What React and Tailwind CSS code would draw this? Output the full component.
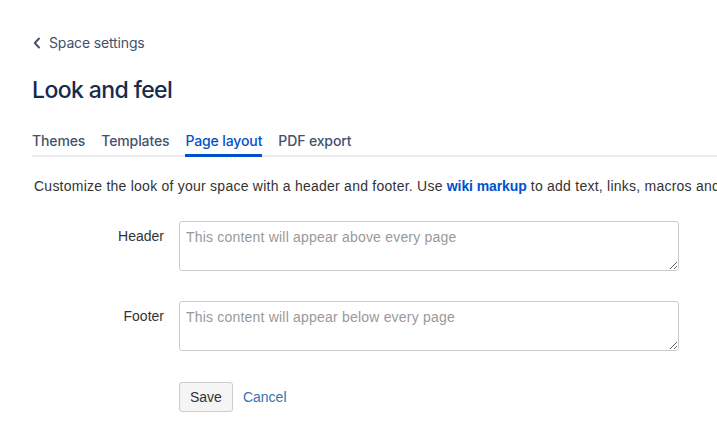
import React from "react";

export default function App() {
  return (
    <div className="w-[717px] h-[438px] overflow-hidden bg-white relative">
      <div className="pl-[32px] pt-[33px]">
        <a className="flex items-center gap-[8px] text-[14px] text-[#42526E] font-['Inter',sans-serif] leading-[20px] h-[20px] tracking-[-0.15px]">
          <svg width="8" height="12" viewBox="0 0 8 12" className="ml-[1px]">
            <path d="M6 1.5 L1.8 6 L6 10.5" fill="none" stroke="#42526E" strokeWidth="1.9" strokeLinecap="round" strokeLinejoin="round" />
          </svg>
          <span>Space settings</span>
        </a>
        <h1 className="mt-[23px] text-[23px] leading-[28px] font-medium text-[#172B4D] font-['Inter',sans-serif] tracking-[-0.6px]">
          Look and feel
        </h1>
        <div className="mt-[27px] flex border-b-2 border-[#EBECF0] font-['Inter',sans-serif] text-[14px] font-medium leading-[20px] tracking-[-0.12px]">
          <div className="mr-[16px] pb-[4px] text-[#42526E]">Themes</div>
          <div className="mr-[16px] pb-[4px] text-[#42526E]">Templates</div>
          <div className="mr-[16px] pb-[4px] text-[#0052CC] relative">
            Page layout
            <div className="absolute left-0 right-0 bottom-[-2px] h-[3px] bg-[#0052CC]"></div>
          </div>
          <div className="pb-[4px] text-[#42526E]">PDF export</div>
        </div>
        <p className="mt-[19px] ml-[2px] whitespace-nowrap text-[14px] leading-[20px] text-[#333333] font-['Liberation_Sans',Arial,sans-serif] tracking-[0.24px]">
          Customize the look of your space with a header and footer. Use{" "}
          <a className="text-[#0052CC] font-bold tracking-[-0.1px]">wiki markup</a> to add text, links, macros and other content.
        </p>
        <div className="mt-[25px] font-['Liberation_Sans',Arial,sans-serif] text-[14px]">
          <div className="flex">
            <label className="w-[132px] text-right text-[#333333] pt-[7px] leading-[16px]">Header</label>
            <textarea
              className="ml-[15px] w-[500px] h-[50px] border border-[#CCCCCC] rounded-[3px] px-[6px] py-[5px] text-[14px] leading-[20px] tracking-[0.2px] placeholder:text-[#999999] outline-none resize-y"
              placeholder="This content will appear above every page"
            ></textarea>
          </div>
          <div className="flex mt-[30px]">
            <label className="w-[132px] text-right text-[#333333] pt-[7px] leading-[16px]">Footer</label>
            <textarea
              className="ml-[15px] w-[500px] h-[50px] border border-[#CCCCCC] rounded-[3px] px-[6px] py-[5px] text-[14px] leading-[20px] tracking-[0.2px] placeholder:text-[#999999] outline-none resize-y"
              placeholder="This content will appear below every page"
            ></textarea>
          </div>
          <div className="flex items-center mt-[31px] ml-[147px]">
            <button className="h-[30px] px-[10px] bg-[#F5F5F5] border border-[#CCCCCC] rounded-[3px] text-[#333333] text-[14px]">
              Save
            </button>
            <a className="ml-[10px] text-[#3572B0] text-[14px]">Cancel</a>
          </div>
        </div>
      </div>
    </div>
  );
}
